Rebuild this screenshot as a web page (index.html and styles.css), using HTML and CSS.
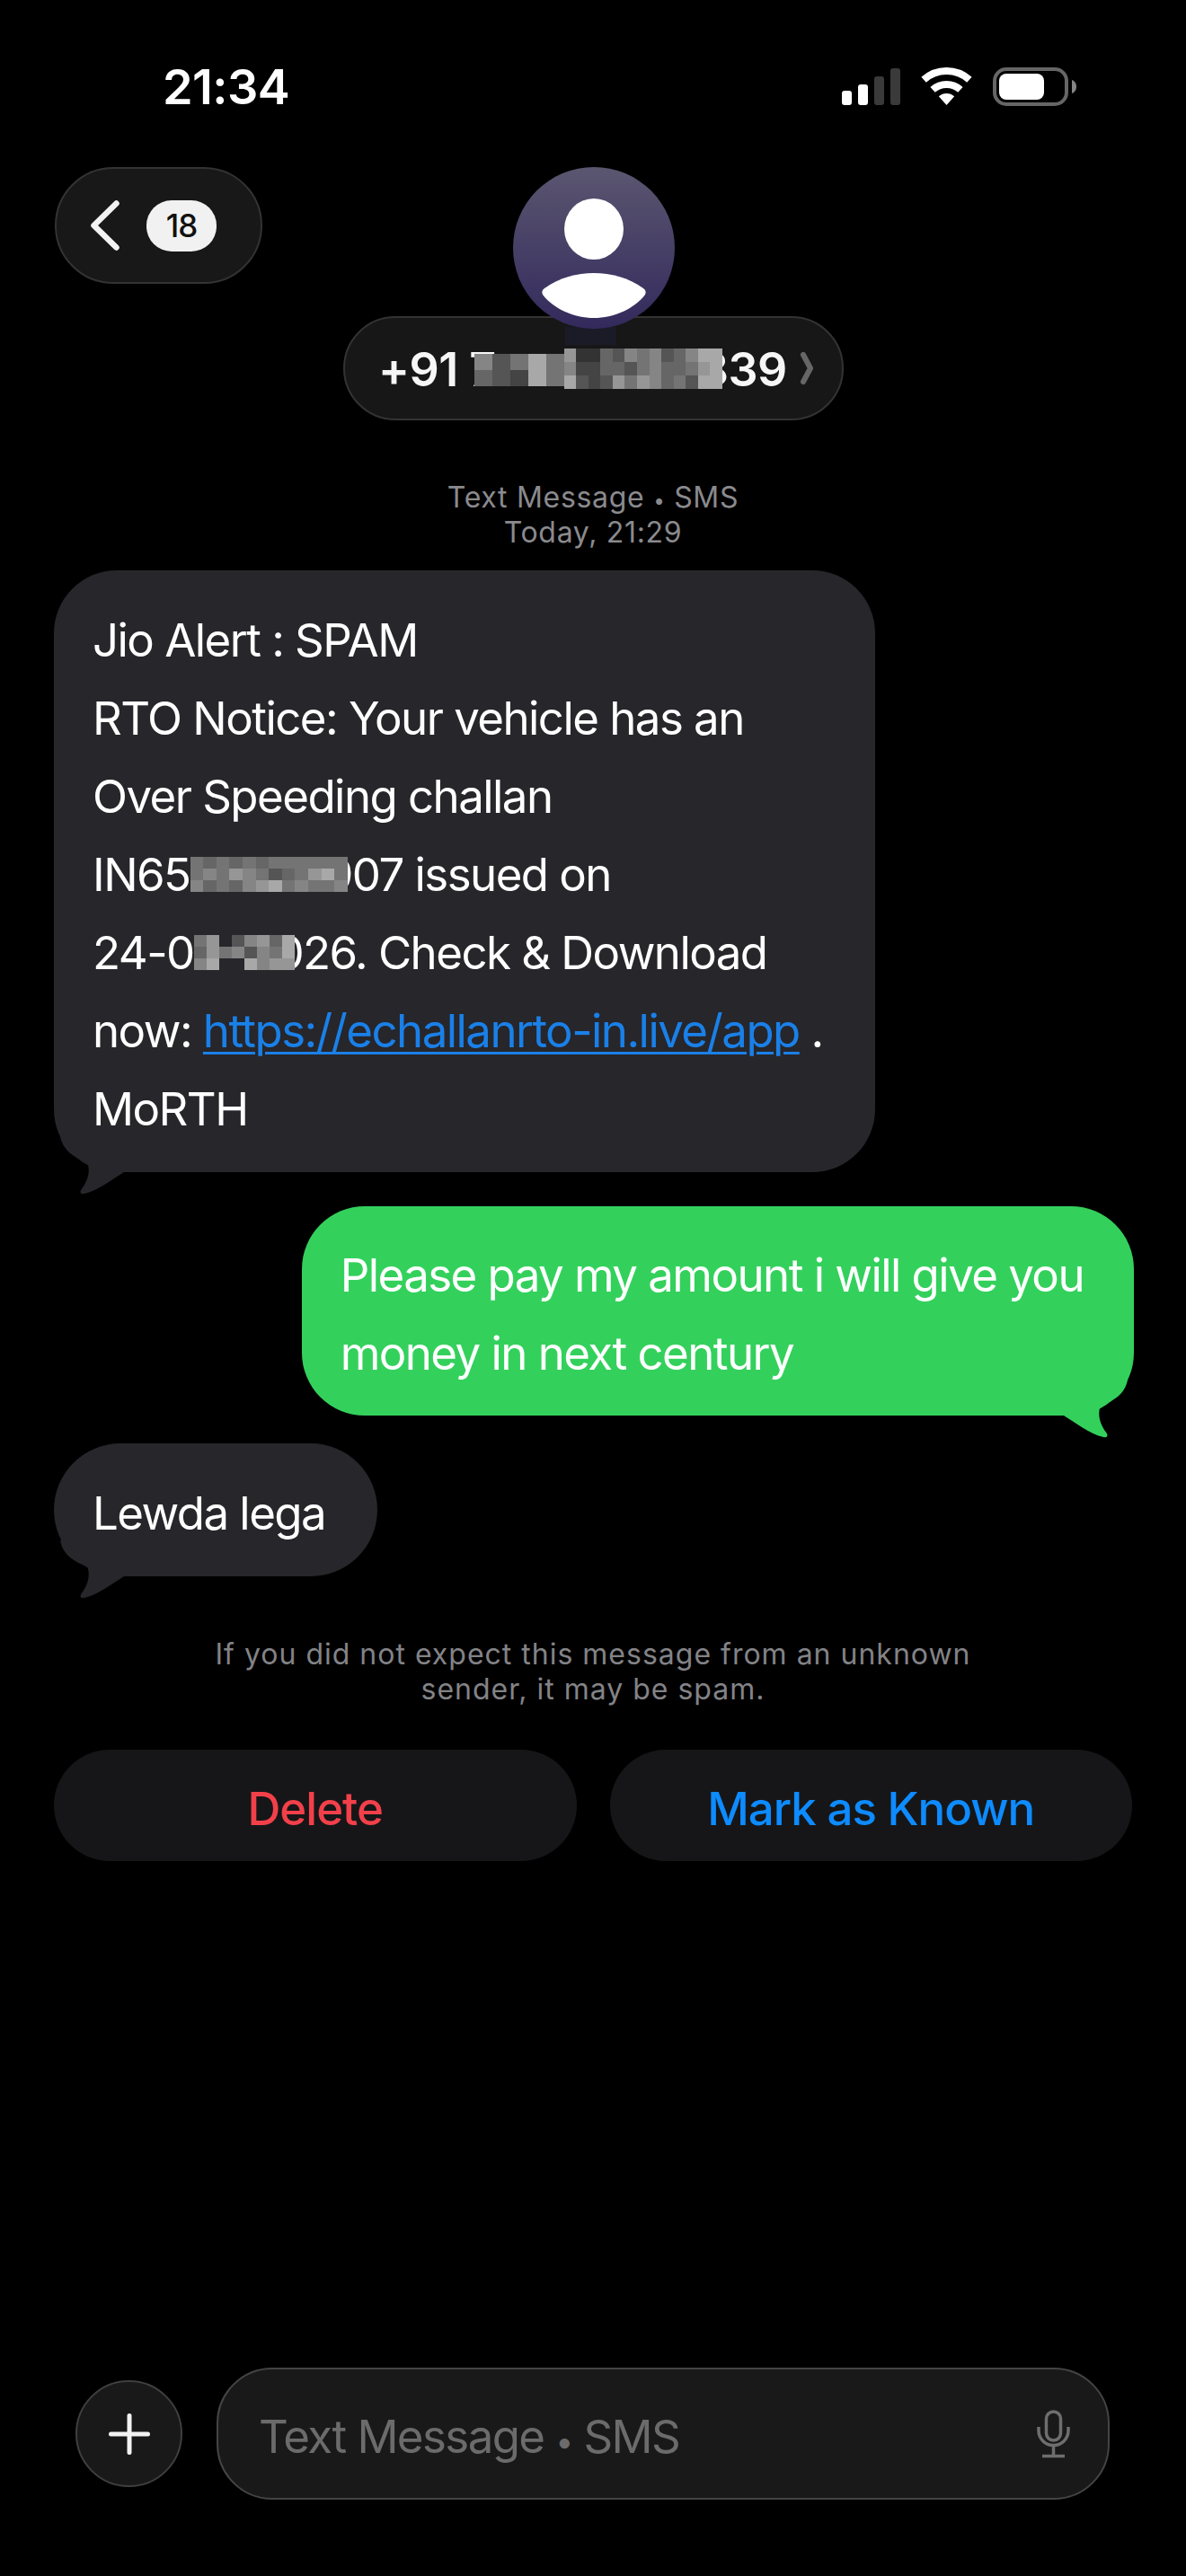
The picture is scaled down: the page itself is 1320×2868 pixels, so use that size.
FILE: index.html
```html
<!DOCTYPE html>
<html lang="en">
<head>
<meta charset="utf-8">
<title>Messages</title>
<link rel="stylesheet" href="styles.css">
</head>
<body>
<div class="page">
  <div class="status">
    <div class="time">21:34</div>
    <div class="status-icons">
      <svg class="ic-signal" viewBox="0 0 65 41"><rect x="0" y="25" width="11" height="16" rx="3" fill="#fff"/><rect x="18" y="18" width="11" height="23" rx="3" fill="#fff"/><rect x="36" y="9" width="11" height="32" rx="3" fill="#3a3a3a"/><rect x="54" y="0" width="11" height="41" rx="3" fill="#3a3a3a"/></svg>
      <svg class="ic-wifi" viewBox="0 0 57 42"><path d="M3.1 13.8A38 38 0 0 1 53.9 13.8" fill="none" stroke="#fff" stroke-width="8"/><path d="M13.1 24.9A23 23 0 0 1 43.9 24.9" fill="none" stroke="#fff" stroke-width="8"/><path d="M28.5 42L19.8 32.3A13 13 0 0 1 37.2 32.3Z" fill="#fff"/></svg>
      <svg class="ic-battery" viewBox="0 0 93 43"><rect x="2" y="2" width="80" height="39" rx="13" fill="none" stroke="#666" stroke-width="4"/><rect x="7" y="7" width="50" height="29" rx="8" fill="#fff"/><path d="M88 14c3 1 5 4 5 7.500s-2 6.500-5 7.500z" fill="#858585"/></svg>
    </div>
  </div>

  <header class="header">
    <div class="back">
      <svg class="ic-back" viewBox="0 0 32 56"><path d="M28.500 3.500L3.500 28L28.500 52.500" fill="none" stroke="#f2f2f2" stroke-width="6.500" stroke-linecap="round" stroke-linejoin="round"/></svg>
      <span class="badge">18</span>
    </div>
    <div class="contact">
      <svg class="avatar" viewBox="0 0 180 198">
        <defs><linearGradient id="av" x1="0" y1="0" x2="0" y2="1"><stop offset="0" stop-color="#5b5670"/><stop offset="1" stop-color="#332a5c"/></linearGradient></defs>
        <rect x="58" y="178" width="57" height="20" fill="#1b1a27"/>
        <circle cx="90" cy="90" r="90" fill="url(#av)"/>
        <ellipse cx="90" cy="69" rx="33" ry="34" fill="#fff"/>
        <path d="M35 135C52 123 71 118 90 118C109 118 128 123 145 135Q149 138 147 142C135 158 112 168 90 168C68 168 45 158 33 142Q31 138 35 135Z" fill="#fff"/>
      </svg>
      <div class="name-pill">
        <span class="name">+91 7<span class="mosaic-pair"><span class="mosaic mo-a"><i class="g6"></i><i class="g3"></i><i class="g5"></i><i class="g8"></i><i class="g5"></i><i class="g4"></i><i class="g3"></i><i class="g2"></i><i class="g8"></i><i class="g5"></i></span><span class="mosaic mo-b"><i class="g7"></i><i class="g1"></i><i class="g1"></i><i class="g4"></i><i class="g3"></i><i class="g6"></i><i class="g5"></i><i class="g6"></i><i class="g3"></i><i class="g4"></i><i class="g6"></i><i class="g8"></i><i class="g8"></i>
        <i class="g6"></i><i class="g2"></i><i class="g2"></i><i class="g4"></i><i class="g4"></i><i class="g3"></i><i class="g5"></i><i class="g6"></i><i class="g4"></i><i class="g4"></i><i class="g5"></i><i class="g7"></i><i class="g8"></i>
        <i class="g8"></i><i class="g3"></i><i class="g2"></i><i class="g3"></i><i class="g7"></i><i class="g5"></i><i class="g7"></i><i class="g6"></i><i class="g4"></i><i class="g5"></i><i class="g3"></i><i class="g8"></i><i class="g8"></i></span></span>839</span>
        <svg class="ic-more" viewBox="0 0 16 38"><path d="M4 4L12 19L4 34" fill="none" stroke="#666" stroke-width="6" stroke-linecap="round" stroke-linejoin="round"/></svg>
      </div>
    </div>
  </header>

  <main class="thread">
    <p class="meta">Text Message <span class="dot">•</span> SMS<br>Today, 21:29</p>

    <div class="bubble in first">
      Jio Alert : SPAM<br>
      RTO Notice: Your vehicle has an<br>
      Over Speeding challan<br>
      IN65<span class="mosaic mo-id"><i class="g5"></i><i class="g4"></i><i class="g5"></i><i class="g4"></i><i class="g5"></i><i class="g4"></i><i class="g5"></i><i class="g5"></i><i class="g5"></i><i class="g5"></i><i class="g5"></i><i class="g5"></i>
      <i class="g5"></i><i class="g6"></i><i class="g5"></i><i class="g7"></i><i class="g6"></i><i class="g5"></i><i class="g3"></i><i class="g4"></i><i class="g5"></i><i class="g7"></i><i class="g8"></i><i class="g5"></i>
      <i class="g6"></i><i class="g4"></i><i class="g5"></i><i class="g4"></i><i class="g6"></i><i class="g7"></i><i class="g8"></i><i class="g5"></i><i class="g6"></i><i class="g5"></i><i class="g5"></i><i class="g6"></i></span>907 issued on<br>
      24-0<span class="mosaic mo-date"><i class="g5"></i><i class="g7"></i><i class="in"></i><i class="g3"></i><i class="g6"></i><i class="g7"></i><i class="g4"></i><i class="g8"></i>
      <i class="g4"></i><i class="g7"></i><i class="g5"></i><i class="g6"></i><i class="g3"></i><i class="g6"></i><i class="g5"></i><i class="g8"></i>
      <i class="g6"></i><i class="g8"></i><i class="in"></i><i class="in"></i><i class="g8"></i><i class="g6"></i><i class="g7"></i><i class="g7"></i></span>026. Check &amp; Download<br>
      now: <span class="link">https://echallanrto-in.live/app</span> .<br>
      MoRTH
      <svg class="tail" viewBox="0 0 90 66"><path d="M7 0C10 18 26 25 37 29C41 38 38 50 30 60Q28 65 34 64C50 60 65 48 78 40H90V0Z"/></svg>
    </div>

    <div class="bubble out">
      Please pay my amount i will give you<br>
      money in next century
      <svg class="tail" viewBox="0 0 90 66"><path d="M7 0C10 18 26 25 37 29C41 38 38 50 30 60Q28 65 34 64C50 60 65 48 78 40H90V0Z"/></svg>
    </div>

    <div class="bubble in last">
      Lewda lega
      <svg class="tail" viewBox="0 0 90 66"><path d="M7 0C10 18 26 25 37 29C41 38 38 50 30 60Q28 65 34 64C50 60 65 48 78 40H90V0Z"/></svg>
    </div>

    <p class="notice">If you did not expect this message from an unknown<br>sender, it may be spam.</p>

    <div class="actions">
      <div class="action delete">Delete</div>
      <div class="action known">Mark as Known</div>
    </div>
  </main>

  <footer class="composer">
    <div class="plus">
      <svg class="ic-plus" viewBox="0 0 46 46"><path d="M23 2.500V43.500M2.500 23H43.500" fill="none" stroke="#f2f2f2" stroke-width="5" stroke-linecap="round"/></svg>
    </div>
    <div class="input">
      <span class="placeholder">Text Message <span class="dot">•</span> SMS</span>
      <svg class="ic-mic" viewBox="0 0 37 54"><rect x="10.500" y="2" width="16" height="32" rx="8" fill="none" stroke="#6e6e6e" stroke-width="3.500"/><path d="M2 19v4a16.500 16.500 0 0 0 33 0v-4M18.500 40v11M6 51.500h25" fill="none" stroke="#6e6e6e" stroke-width="3.500" stroke-linecap="butt"/></svg>
    </div>
  </footer>
</div>
</body>
</html>
```

FILE: styles.css
```css
* { box-sizing: border-box; }
html, body { margin: 0; padding: 0; background: #000; }
.page {
  width: 1320px;
  height: 2868px;
  overflow: hidden;
  display: flex;
  flex-direction: column;
  background: #000;
  color: #fff;
  font-family: Inter, "Liberation Sans", sans-serif;
}

/* status bar */
.status {
  display: flex;
  justify-content: space-between;
  align-items: flex-start;
  padding: 75px 122px 0 181px;
  height: 186px;
}
.time { font-size: 54px; font-weight: 600; line-height: 44px; letter-spacing: -0.6px; }
.status-icons { display: flex; gap: 23px; align-items: flex-start; }
.ic-signal { width: 65px; height: 41px; margin-top: 1px; }
.ic-wifi { width: 57px; height: 42px; }
.ic-battery { width: 93px; height: 43px; }

/* header */
.header {
  display: grid;
  grid-template-columns: 1fr auto 1fr;
  padding: 0 60px 0 61px;
  align-items: start;
}
.back {
  justify-self: start;
  width: 231px;
  height: 130px;
  border-radius: 65px;
  background: #181818;
  border: 2px solid #333;
  display: flex;
  align-items: center;
  gap: 30px;
  padding-left: 38px;
}
.ic-back { width: 32px; height: 56px; }
.badge {
  width: 78px;
  height: 57px;
  border-radius: 28px;
  background: #f1f1f1;
  color: #111;
  font-size: 35px;
  font-weight: 500;
  display: flex;
  align-items: center;
  justify-content: center;
  letter-spacing: -1px;
}
.contact { width: 557px; display: flex; flex-direction: column; align-items: center; }
.avatar { width: 180px; height: 198px; margin-bottom: -32px; position: relative; z-index: 1; display: block; }
.name-pill {
  width: 557px;
  height: 116px;
  border-radius: 58px;
  background: #171717;
  border: 2px solid #333;
  display: flex;
  align-items: center;
  justify-content: space-between;
  padding: 0 31px 0 37px;
}
.name { font-size: 52px; font-weight: 600; line-height: 116px; height: 112px; white-space: nowrap; color: #f6f6f6; letter-spacing: -0.5px; }
.mosaic-pair { display: inline-flex; vertical-align: top; align-items: flex-start; margin: 34px -26px 0 -24px; position: relative; z-index: 1; }
.ic-more { width: 16px; height: 38px; }

/* mosaics */
.mosaic { display: inline-grid; position: relative; z-index: 1; }
.mosaic i { display: block; }
.mo-a { grid-template-columns: repeat(5, 20px); grid-auto-rows: 18px; margin-top: 6px; }
.mo-b { grid-template-columns: repeat(13, 13.540px); grid-auto-rows: 15px; }
.mo-id { grid-template-columns: repeat(12, 14.600px); grid-auto-rows: 13px; vertical-align: top; margin: 24px -25px 0 0; }
.mo-date { grid-template-columns: repeat(8, 14.100px); grid-auto-rows: 13px; vertical-align: top; margin: 24px -22px 0 0; }
.g1 { background: #333; }
.g2 { background: #444; }
.g3 { background: #555; }
.g4 { background: #666; }
.g5 { background: #747474; }
.g6 { background: #858585; }
.g7 { background: #969696; }
.g8 { background: #a8a8a8; }
.in { background: #26262b; }

/* thread */
.thread { display: flex; flex-direction: column; padding: 66px 60px 0; }
.meta {
  margin: 0 0 23px;
  text-align: center;
  font-size: 32px;
  line-height: 39px;
  letter-spacing: 0.7px;
  color: #8a8a8e;
}
.dot { font-size: 0.7em; line-height: 0; }
.bubble {
  position: relative;
  font-size: 51px;
  line-height: 87px;
  font-weight: 400;
  border-radius: 70px;
  padding: 34px 58px 27px 43px;
  white-space: nowrap;
  letter-spacing: -1.55px;
}
.bubble.in { align-self: flex-start; background: #26262b; }
.bubble.out { align-self: flex-end; background: #33d15c; margin: 38px -2px 31px 0; padding-top: 33px; padding-bottom: 26px; padding-right: 56px; }
.bubble.last { border-radius: 74px; }
.link { color: #1a80e8; text-decoration: underline; text-decoration-thickness: 3px; text-underline-offset: 5px; }
.tail { position: absolute; width: 90px; height: 66px; bottom: -26px; left: 0; }
.bubble.in .tail { fill: #26262b; }
.bubble.out .tail { fill: #33d15c; left: auto; right: 0; transform: scaleX(-1); }

.notice {
  margin: 67px 0 48px;
  text-align: center;
  font-size: 32px;
  line-height: 39px;
  letter-spacing: 1px;
  color: #838387;
}
.actions { display: flex; gap: 37px; }
.action {
  flex: 1;
  height: 124px;
  border-radius: 62px;
  background: #161618;
  display: flex;
  align-items: center;
  justify-content: center;
  padding-top: 6px;
  font-size: 51px;
  font-weight: 500;
  letter-spacing: -1px;
}
.delete { color: #f2404a; }
.known { color: #0d8bff; }

/* composer */
.composer {
  margin-top: auto;
  display: flex;
  align-items: center;
  gap: 38px;
  padding: 0 85px 85px 84px;
}
.plus {
  width: 119px;
  height: 119px;
  border-radius: 50%;
  background: #191919;
  border: 2px solid #3f3f3f;
  display: flex;
  align-items: center;
  justify-content: center;
  flex: none;
}
.ic-plus { width: 46px; height: 46px; }
.input {
  flex: 1;
  height: 147px;
  border-radius: 62px;
  background: #191919;
  border: 2px solid #444;
  display: flex;
  align-items: center;
  justify-content: space-between;
  padding: 0 42px 0 45px;
}
.placeholder { font-size: 51px; color: #6b6b6b; letter-spacing: -1.6px; padding-top: 6px; }
.ic-mic { width: 37px; height: 54px; }
```
